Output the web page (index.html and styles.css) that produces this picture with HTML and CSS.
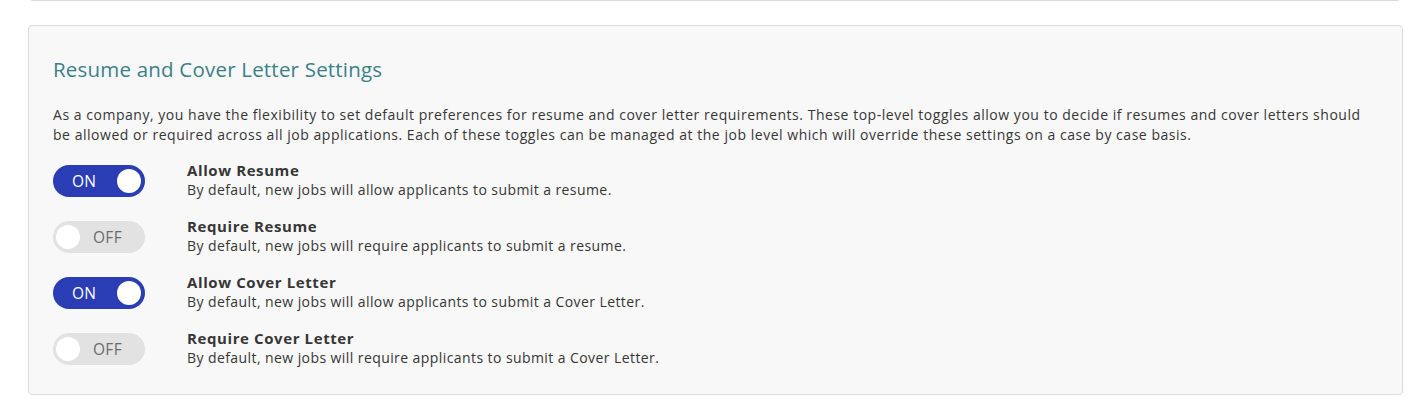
FILE: index.html
```html
<!DOCTYPE html>
<html lang="en">
<head>
<meta charset="utf-8">
<title>Resume and Cover Letter Settings</title>
<link rel="stylesheet" href="styles.css">
</head>
<body>
<div class="page">
  <div class="prev-card"></div>
  <section class="card">
    <h2 class="card-title">Resume and Cover Letter Settings</h2>
    <p class="intro">As a company, you have the flexibility to set default preferences for resume and cover letter requirements. These top-level toggles allow you to decide if resumes and cover letters should be allowed or required across all job applications. Each of these toggles can be managed at the job level which will override these settings on a case by case basis.</p>
    <div class="settings">
      <div class="setting">
        <span class="toggle on"><span class="toggle-label">ON</span><span class="knob"></span></span>
        <div class="setting-text">
          <div class="setting-name">Allow Resume</div>
          <div class="setting-desc">By default, new jobs will allow applicants to submit a resume.</div>
        </div>
      </div>
      <div class="setting">
        <span class="toggle off"><span class="knob"></span><span class="toggle-label">OFF</span></span>
        <div class="setting-text">
          <div class="setting-name">Require Resume</div>
          <div class="setting-desc">By default, new jobs will require applicants to submit a resume.</div>
        </div>
      </div>
      <div class="setting">
        <span class="toggle on"><span class="toggle-label">ON</span><span class="knob"></span></span>
        <div class="setting-text">
          <div class="setting-name">Allow Cover Letter</div>
          <div class="setting-desc">By default, new jobs will allow applicants to submit a Cover Letter.</div>
        </div>
      </div>
      <div class="setting">
        <span class="toggle off"><span class="knob"></span><span class="toggle-label">OFF</span></span>
        <div class="setting-text">
          <div class="setting-name">Require Cover Letter</div>
          <div class="setting-desc">By default, new jobs will require applicants to submit a Cover Letter.</div>
        </div>
      </div>
    </div>
  </section>
</div>
</body>
</html>
```

FILE: styles.css
```css
* { box-sizing: border-box; }
html, body { margin: 0; padding: 0; background: #ffffff; }
body {
  font-family: "Open Sans", "Liberation Sans", sans-serif;
  color: #363636;
}
.page {
  width: 1375px;
  margin-left: 28px;
}
.prev-card {
  height: 8px;
  margin: -7px 2px 0 1px;
  border: 1px solid #d9d9d9;
  border-radius: 4px;
  background: #f8f8f8;
}
.card {
  margin-top: 24px;
  border: 1px solid #dcdcdc;
  border-radius: 4px;
  background: #f8f8f8;
  padding: 31px 24px 26px 24px;
}
.card-title {
  margin: 0;
  font-size: 20.5px;
  line-height: 24px;
  font-weight: 400;
  letter-spacing: 0.2px;
  color: #3b8088;
}
.intro {
  margin: 24px 0 0 0;
  font-size: 14px;
  line-height: 20px;
  letter-spacing: 0.53px;
  color: #363636;
}
.settings {
  margin-top: 15px;
  display: flex;
  flex-direction: column;
  gap: 16px;
}
.setting {
  display: flex;
  align-items: center;
  gap: 42px;
  height: 40px;
}
.toggle {
  flex: none;
  width: 92px;
  height: 32px;
  margin-top: 2px;
  border-radius: 16px;
  display: flex;
  align-items: center;
  padding: 0 4px;
}
.toggle.on {
  background: #2a3db4;
  justify-content: space-between;
  padding-left: 19px;
}
.toggle.off {
  background: #e2e2e2;
  padding-left: 3px;
}
.knob {
  width: 24px;
  height: 24px;
  border-radius: 50%;
  background: #ffffff;
}
.toggle-label {
  font-size: 15.5px;
  line-height: 16px;
  letter-spacing: 0.3px;
}
.toggle.on .toggle-label { color: #ffffff; }
.toggle.off .toggle-label { color: #6b6b6b; margin-left: 13px; }
.setting-name {
  font-size: 15px;
  line-height: 20px;
  font-weight: 700;
  letter-spacing: 0.6px;
  color: #363636;
}
.setting-desc {
  font-size: 14px;
  line-height: 20px;
  letter-spacing: 0.42px;
  color: #363636;
}
```
